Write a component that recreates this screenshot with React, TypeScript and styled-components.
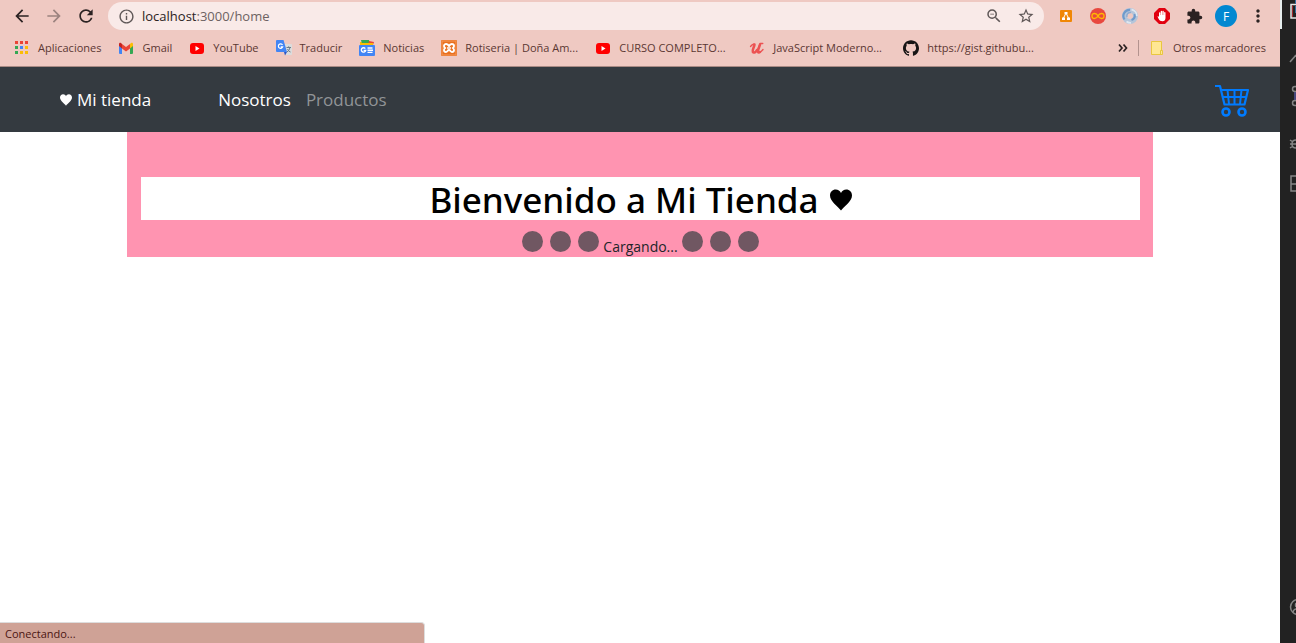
import React from 'react';
import styled, { createGlobalStyle } from 'styled-components';
import { SiGithub } from 'react-icons/si';
import {
  MdArrowBack,
  MdArrowForward,
  MdExtension,
  MdInfoOutline,
  MdMoreVert,
  MdRefresh,
  MdStarBorder,
  MdZoomOut,
} from 'react-icons/md';

const GlobalStyle = createGlobalStyle`
  *, *::before, *::after { box-sizing: border-box; }
  body {
    margin: 0;
    background: #fff;
    color: #212529;
    font-family: 'Segoe UI', 'Open Sans', 'Noto Sans', sans-serif;
  }
  button { font: inherit; color: inherit; }
  svg { display: block; flex: none; }
`;

const Desktop = styled.div`
  display: flex;
  min-height: 100vh;
`;

const Browser = styled.div`
  position: relative;
  flex: 1;
  min-width: 0;
  display: flex;
  flex-direction: column;
`;

const Chrome = styled.header`
  background: #efc9c2;
  border-bottom: 1px solid #a98a84;
`;

const Toolbar = styled.div`
  display: flex;
  align-items: center;
  height: 32px;
  padding: 0 6px;
`;

const ToolButton = styled.button<{ $color?: string }>`
  display: flex;
  align-items: center;
  justify-content: center;
  width: 32px;
  height: 28px;
  padding: 0;
  border: 0;
  background: none;
  color: ${(p) => p.$color ?? '#2b2222'};
`;

const AddressBar = styled.div`
  flex: 1;
  display: flex;
  align-items: center;
  height: 28px;
  margin: 0 6px;
  padding: 0 2px 0 10px;
  border-radius: 14px;
  background: #f9eae8;
  color: #5f5757;
`;

const AddressField = styled.div`
  position: relative;
  flex: 1;
  height: 20px;
  margin-left: 7px;
  font-size: 13px;
  line-height: 20px;
`;

const AddressInput = styled.input`
  display: block;
  width: 100%;
  height: 20px;
  padding: 0;
  border: 0;
  outline: 0;
  background: none;
  font: inherit;
  color: transparent;
  caret-color: #222;
`;

const AddressText = styled.span`
  position: absolute;
  inset: 0;
  pointer-events: none;
  color: #6d6262;
  b { font-weight: 400; color: #2b2222; }
`;

const Avatar = styled.span`
  display: flex;
  align-items: center;
  justify-content: center;
  width: 22px;
  height: 22px;
  border-radius: 50%;
  background: #0288d1;
  color: #fff;
  font-size: 12px;
`;

const BookmarksBar = styled.nav`
  display: flex;
  align-items: center;
  gap: 17px;
  height: 34px;
  padding: 0 14px 2px;
`;

const Bookmark = styled.a<{ $long?: boolean }>`
  display: flex;
  align-items: center;
  gap: 8px;
  min-width: ${(p) => (p.$long ? '137px' : '0')};
  color: #5b3732;
  font-size: 11px;
  line-height: 16px;
  text-decoration: none;
  white-space: nowrap;
`;

const BookmarkEnd = styled.div`
  display: flex;
  align-items: center;
  gap: 10px;
  margin-left: auto;
`;

const Divider = styled.span`
  width: 1px;
  height: 16px;
  background: #b3938e;
`;

const Navbar = styled.nav`
  display: flex;
  align-items: center;
  height: 65px;
  padding: 0 31px 0 60px;
  background: #343a40;
`;

const Brand = styled.a`
  display: flex;
  align-items: center;
  gap: 5px;
  margin-right: 67px;
  color: #fff;
  font-size: 17px;
  line-height: 24px;
  text-decoration: none;
`;

const NavLink = styled.a<{ $active?: boolean }>`
  margin-right: 15px;
  color: ${(p) => (p.$active ? '#fff' : '#919497')};
  font-size: 17px;
  line-height: 24px;
  text-decoration: none;
`;

const CartButton = styled.button`
  margin-left: auto;
  padding: 2px 0 0;
  border: 0;
  background: none;
`;

const Hero = styled.main`
  width: calc(100% - 32px);
  max-width: 1026px;
  margin: 0 auto;
  padding: 45px 13px 5px 14px;
  background: #ff94b1;
`;

const Title = styled.h1`
  display: flex;
  align-items: center;
  justify-content: center;
  gap: 11px;
  margin: 0 0 11px;
  padding-top: 2px;
  background: #fff;
  color: #000;
  font-family: 'Segoe UI', 'Noto Sans', 'Open Sans', sans-serif;
  font-size: 35px;
  font-weight: 500;
  line-height: 41px;
`;

const Loading = styled.div`
  display: flex;
  align-items: center;
  justify-content: center;
  gap: 4px;
  height: 21px;
  font-size: 14px;
  line-height: 20px;
`;

const Dots = styled.span`
  display: flex;
  gap: 7px;
`;

const Dot = styled.span`
  width: 21px;
  height: 21px;
  border-radius: 50%;
  background: #705762;
`;

const LoadingText = styled.span`
  padding-top: 10px;
`;

const StatusBar = styled.div`
  position: absolute;
  left: 0;
  bottom: 0;
  width: 425px;
  max-width: 100%;
  height: 21px;
  padding: 1px 5px 0;
  border: 1px solid #ddd;
  border-width: 1px 1px 0 0;
  border-top-right-radius: 4px;
  background: #cfa296;
  color: #4b1512;
  font-size: 11px;
  line-height: 20px;
`;

const EditorStrip = styled.aside`
  flex: none;
  width: 16px;
  overflow: hidden;
  background: #222;
`;

const Heart = ({ size, color }: { size: number; color: string }) => (
  <svg width={size} height={size} viewBox="0 0 22 22" aria-hidden="true">
    <path fill={color} d="M11 21.500C8 17.500 0 12.500 0 6.500C0 3 2.500.5 5.700.5C8.200.5 10 1.800 11 4C12 1.800 13.800.5 16.300.5C19.500.5 22 3 22 6.500C22 12.500 14 17.500 11 21.500Z" />
  </svg>
);

const AppsIcon = () => (
  <svg width="16" height="16" viewBox="0 0 16 16">
    {['#ea4335', '#ea4335', '#ea4335', '#34a853', '#4285f4', '#fbbc04', '#34a853', '#fbbc04', '#fbbc04'].map((c, i) => (
      <rect key={i} x={1 + (i % 3) * 5} y={1 + Math.floor(i / 3) * 5} width="3" height="3" fill={c} />
    ))}
  </svg>
);

const GmailIcon = () => (
  <svg width="16" height="16" viewBox="0 0 16 16">
    <path fill="#4285f4" d="M1 5l3 2v7H2a1 1 0 0 1-1-1z" />
    <path fill="#34a853" d="M12 7l3-2v8a1 1 0 0 1-1 1h-2z" />
    <path fill="#fbbc04" d="M12 4l1-1c1-.8 2 0 2 1v2l-3 2.500z" />
    <path fill="#c5221f" d="M1 6V4c0-1 1-1.800 2-1l1 1v4.500z" />
    <path fill="#ea4335" d="M4 4l4 3 4-3v4.500l-4 3-4-3z" />
  </svg>
);

const YouTubeIcon = () => (
  <svg width="16" height="16" viewBox="0 0 16 16">
    <rect x="1" y="3" width="14" height="11" rx="3" fill="#f00" />
    <path fill="#fff" d="M6.500 6v5L10.500 8.500z" />
  </svg>
);

const TranslateIcon = () => (
  <svg width="16" height="16" viewBox="0 0 16 16">
    <path fill="#dcdcdc" d="M7 4h8a1 1 0 0 1 1 1v9a1 1 0 0 1-1 1H10z" />
    <path fill="#4285f4" d="M1 0h6.500l3.500 12H1a1 1 0 0 1-1-1V1a1 1 0 0 1 1-1z" />
    <path fill="#2a56c6" d="M8 12h3l-2 3.500z" />
    <path fill="none" stroke="#fff" strokeWidth="1.200" d="M6.500 5A2.200 2.200 0 1 0 6.700 6.800H4.700" />
    <path fill="none" stroke="#6b7d8c" d="M10.500 7.500H15M12.700 6.300v1.200M14 7.500Q13.500 10.500 11 12M11.500 9Q12.500 11.500 14.500 12" />
  </svg>
);

const NewsIcon = () => (
  <svg width="16" height="16" viewBox="0 0 16 16">
    <path fill="#fbbc04" d="M1 2h4v4H1z" />
    <path fill="#34a853" d="M2 0h8l1 4H3z" />
    <path fill="#ea4335" d="M10 1l5 1-1 3H9z" />
    <path fill="#fbbc04" d="M1 3h13v3H1z" />
    <rect y="5" width="16" height="11" rx="1" fill="#4285f4" />
    <path fill="none" stroke="#fff" strokeWidth="1.400" d="M6.300 8.600A2.200 2.200 0 1 0 6.700 10.400H4.600M8.500 8h5M8.500 10.200h5.500M8.500 12.400h5" />
  </svg>
);

const XamppIcon = () => (
  <svg width="16" height="16" viewBox="0 0 16 16">
    <rect width="16" height="16" rx="1" fill="#e9701f" />
    <rect x="1" y="1" width="14" height="14" fill="none" stroke="#f59a5c" />
    <path fill="none" stroke="#fff" strokeWidth="1.900" strokeLinejoin="round" d="M8 6.200C7.300 4.500 6.300 4 5.300 4C3.700 4 3 5 3 6C3 7 3.600 7.700 4.300 8C3.500 8.400 3 9 3 10C3 11.200 3.900 12 5 12C6.500 12 6.500 10 8 10C9.500 10 9.500 12 11 12C12.100 12 13 11.200 13 10C13 9 12.500 8.400 11.700 8C12.400 7.700 13 7 13 6C13 5 12.300 4 10.700 4C9.700 4 8.700 4.500 8 6.200Z" />
    <path stroke="#fff" strokeWidth="1.500" d="M6 8h4" />
  </svg>
);

const UdemyIcon = () => (
  <svg width="16" height="16" viewBox="0 0 16 16" fill="none" stroke="#ec5252" strokeLinecap="round" strokeLinejoin="round">
    <path strokeWidth="1.300" d="M1.500 6.500Q3 4.500 5 4M8 11L11 4M10.500 12.500Q12.500 11.500 14 9.500M11 3.500h2.800" />
    <path strokeWidth="2.500" d="M5.500 4.500C5.500 6.500 3 10 3.800 11.800C4.800 13.500 7 12 8 10M11 4.500C10.500 7 8.500 10 9 12Q9.500 13 11 12" />
  </svg>
);

const FolderIcon = () => (
  <svg width="16" height="16" viewBox="0 0 16 16">
    <path fill="#ffe793" stroke="#e9c73f" d="M2.500 1.500h10v9h1v4h-11z" />
    <path fill="none" stroke="#e9c73f" d="M11.500 14v-3.500h1.500" />
  </svg>
);

const DiagramIcon = () => (
  <svg width="14" height="14" viewBox="0 0 14 14">
    <rect x="1" y="1" width="12" height="12" rx="1" fill="#f08705" />
    <path fill="none" stroke="#fff" d="M7 4L4.500 9M7 4l2.500 5" />
    <path fill="#fff" d="M5.500 3h3v2.300h-3zM3 8.500h3v2.500H3zM8 8.500h3v2.500H8z" />
  </svg>
);

const InfinityIcon = () => (
  <svg width="16" height="16" viewBox="0 0 16 16">
    <circle cx="8" cy="8" r="8" fill="#e8483f" />
    <path fill="none" stroke="#ffb900" strokeWidth="1.400" d="M8 8C6.500 5 2 4.500 2 8s4.500 3 6 0 6-3.500 6 0-4.500 3-6 0z" />
  </svg>
);

const SwirlIcon = () => (
  <svg width="16" height="16" viewBox="0 0 16 16">
    <circle cx="8" cy="8" r="5.500" fill="none" stroke="#b4c5da" strokeWidth="5" />
    <path fill="none" stroke="#6f9acb" strokeWidth="2.200" d="M2.500 11.500A6.200 6.200 0 0 1 8 1.800M9.500 12A4.500 4.500 0 0 0 12.500 6" />
    <path fill="none" stroke="#8fabd0" strokeWidth="1.500" d="M5 9A3.500 3.500 0 0 1 9 4.500" />
    <path fill="none" stroke="#dfe7f0" strokeWidth="1.800" d="M9.500 1.500A6.500 6.500 0 0 1 14.800 8M4.500 13.500A6.500 6.500 0 0 0 9 14.800" />
  </svg>
);

const StopHandIcon = () => (
  <svg width="16" height="16" viewBox="0 0 16 16">
    <path fill="#e1000f" d="M5 0h6l5 5v6l-5 5H5l-5-5V5z" />
    <path fill="#fff" d="M5 5a.7.7 0 0 1 1.400 0v2h.3V3.500a.7.7 0 0 1 1.400 0V7h.3V3.500a.7.7 0 0 1 1.400 0V7h.3V4.800a.7.7 0 0 1 1.400 0V10c0 2-1.200 3.300-3 3.300-2 0-3-1-3.800-2.300L3.500 8.500c.5-.6 1-.3 1.500.3z" />
  </svg>
);

const CartIcon = () => (
  <svg width="34" height="34" viewBox="0 0 34 34" fill="none" stroke="#007bff" strokeWidth="2">
    <path strokeWidth="2.200" strokeLinejoin="round" d="M0 2h5l4.500 18.500h20L33 6H6" />
    <path d="M7.500 13h24M12.500 6l1.500 14M19.500 6v14M26.500 6l-1.500 14" />
    <circle cx="11" cy="28" r="3.500" strokeWidth="2.600" />
    <circle cx="27" cy="28" r="3.500" strokeWidth="2.600" />
  </svg>
);

const EditorIcons = () => (
  <svg width="16" height="643" viewBox="0 0 16 643" fill="none" stroke="#858585" strokeWidth="1.500">
    <path stroke="none" fill="#e6eeee" d="M0 0h2v29H0z" />
    <path stroke="#e8e8e8" d="M16 4.500h-5v13.500h5" />
    <path stroke="#a3282c" strokeWidth="1" d="M12.500 5.500v11.500" />
    <path stroke="#2f6f9f" strokeWidth="1" d="M15.500 0v4M15.500 6v7" />
    <path d="M10 62l6-7" />
    <circle cx="15" cy="89" r="2.500" />
    <circle cx="15" cy="103" r="2.500" />
    <path stroke="#55559a" d="M15 92v8" />
    <path d="M16 140q-4 0-4 4t4 4M10 140l3 2M10 144h6M10 148l3-2" />
    <path d="M16 176h-5v15h5M11 184h5" />
    <circle cx="18" cy="607" r="7.500" />
    <path d="M13 612q1-3 3-3M16 603q-1 2 0 4" />
  </svg>
);

const bookmarks = [
  { label: 'Aplicaciones', icon: <AppsIcon /> },
  { label: 'Gmail', icon: <GmailIcon /> },
  { label: 'YouTube', icon: <YouTubeIcon /> },
  { label: 'Traducir', icon: <TranslateIcon /> },
  { label: 'Noticias', icon: <NewsIcon /> },
  { label: 'Rotiseria | Doña Am...', icon: <XamppIcon />, long: true },
  { label: 'CURSO COMPLETO...', icon: <YouTubeIcon />, long: true },
  { label: 'JavaScript Moderno...', icon: <UdemyIcon />, long: true },
  { label: 'https://gist.githubu...', icon: <SiGithub size={16} color="#171515" />, long: true },
];

const extensions = [
  { name: 'Diagramas', icon: <DiagramIcon /> },
  { name: 'Infinito', icon: <InfinityIcon /> },
  { name: 'Sincronizar', icon: <SwirlIcon /> },
  { name: 'Bloqueador', icon: <StopHandIcon /> },
  { name: 'Extensiones', icon: <MdExtension size={17} /> },
  { name: 'Perfil', icon: <Avatar>F</Avatar> },
  { name: 'Menú', icon: <MdMoreVert size={20} /> },
];

const ThreeDots = () => (
  <Dots aria-hidden="true">
    <Dot />
    <Dot />
    <Dot />
  </Dots>
);

export default function App() {
  return (
    <>
      <GlobalStyle />
      <Desktop>
        <Browser>
          <Chrome>
            <Toolbar>
              <ToolButton aria-label="Atrás"><MdArrowBack size={20} /></ToolButton>
              <ToolButton aria-label="Adelante" $color="#9c837f"><MdArrowForward size={20} /></ToolButton>
              <ToolButton aria-label="Recargar"><MdRefresh size={20} /></ToolButton>
              <AddressBar>
                <MdInfoOutline size={17} />
                <AddressField>
                  <AddressInput aria-label="Dirección" defaultValue="" />
                  <AddressText><b>localhost</b>:3000/home</AddressText>
                </AddressField>
                <ToolButton aria-label="Zoom" $color="#5f5757"><MdZoomOut size={18} /></ToolButton>
                <ToolButton aria-label="Favorito" $color="#5f5757"><MdStarBorder size={18} /></ToolButton>
              </AddressBar>
              {extensions.map((e) => (
                <ToolButton key={e.name} aria-label={e.name}>{e.icon}</ToolButton>
              ))}
            </Toolbar>
            <BookmarksBar>
              {bookmarks.map((b) => (
                <Bookmark key={b.label} href="#" $long={b.long}>{b.icon}{b.label}</Bookmark>
              ))}
              <BookmarkEnd>
                <svg width="10" height="10" viewBox="0 0 10 10" fill="none" stroke="#2b2222" strokeWidth="1.700">
                  <path d="M1 1.500L4 5 1 8.500M5.500 1.500L8.500 5 5.500 8.500" />
                </svg>
                <Divider />
                <Bookmark href="#"><FolderIcon />Otros marcadores</Bookmark>
              </BookmarkEnd>
            </BookmarksBar>
          </Chrome>
          <Navbar>
            <Brand href="#"><Heart size={12} color="#fff" />Mi tienda</Brand>
            <NavLink href="#" $active>Nosotros</NavLink>
            <NavLink href="#">Productos</NavLink>
            <CartButton aria-label="Carrito"><CartIcon /></CartButton>
          </Navbar>
          <Hero>
            <Title>Bienvenido a Mi Tienda<Heart size={22} color="#000" /></Title>
            <Loading>
              <ThreeDots />
              <LoadingText>Cargando...</LoadingText>
              <ThreeDots />
            </Loading>
          </Hero>
          <StatusBar>Conectando...</StatusBar>
        </Browser>
        <EditorStrip>
          <EditorIcons />
        </EditorStrip>
      </Desktop>
    </>
  );
}
